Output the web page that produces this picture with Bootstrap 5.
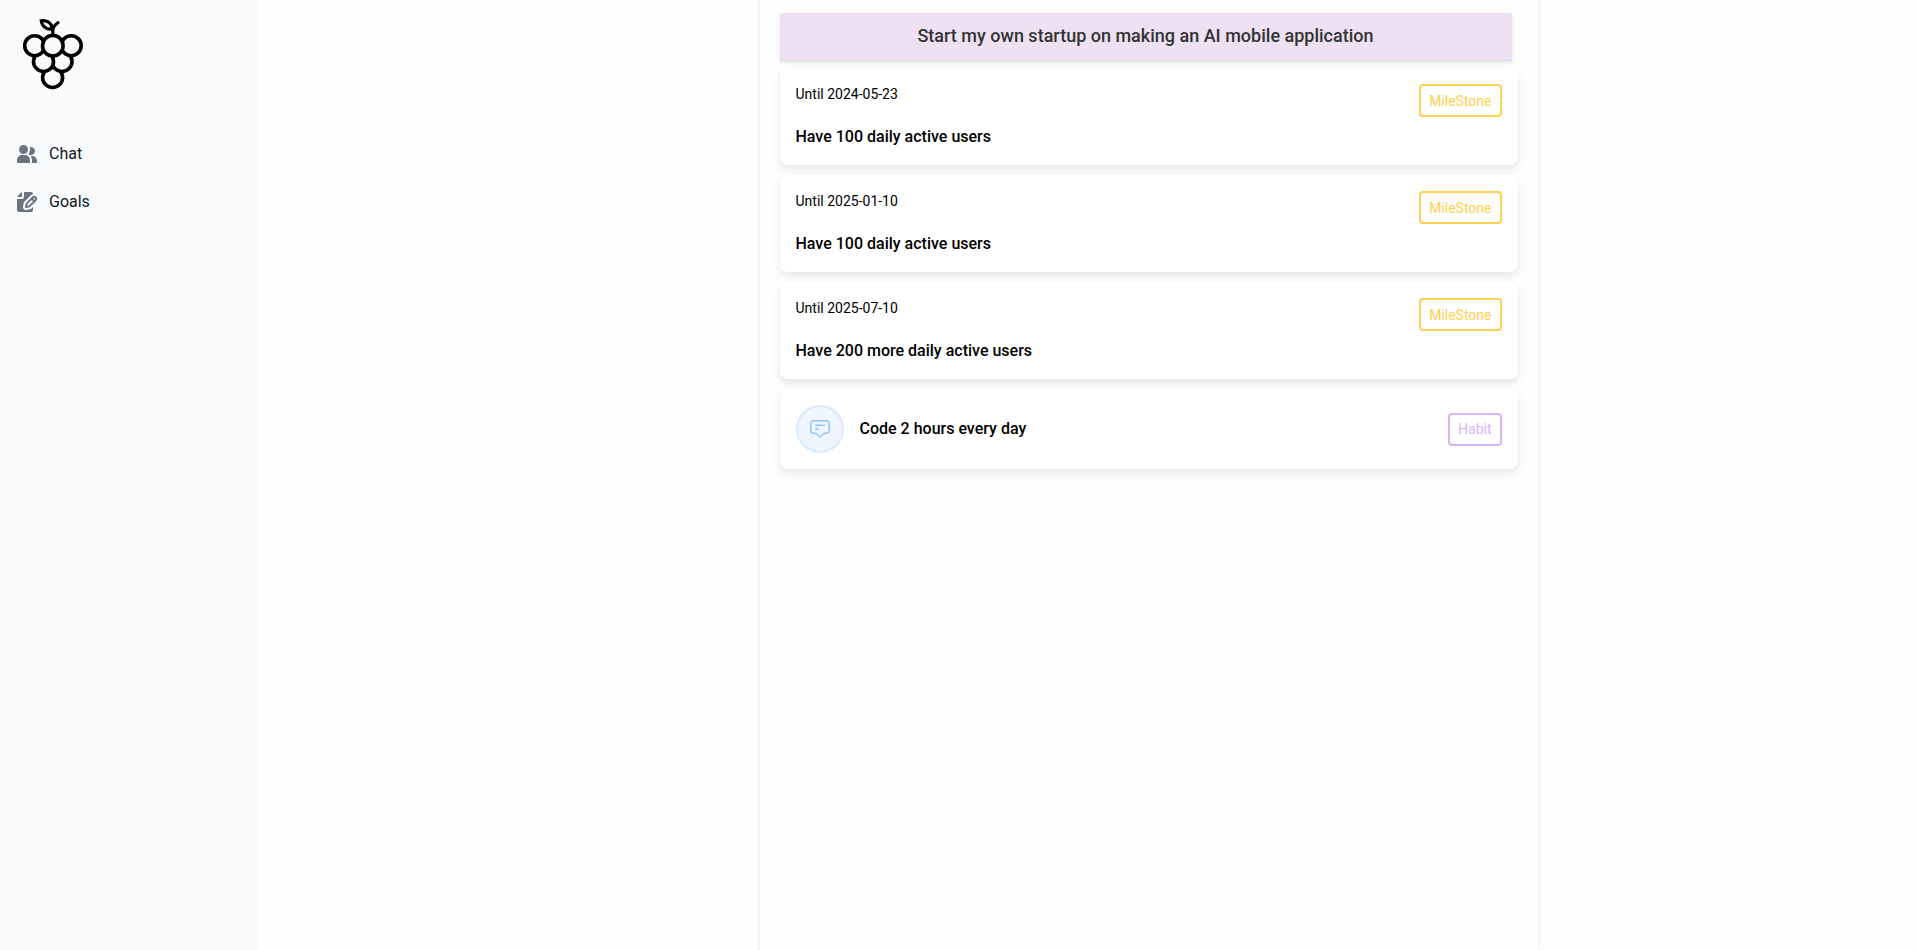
<!DOCTYPE html>
<html lang="en">
<head>
<meta charset="utf-8">
<meta name="viewport" content="width=device-width, initial-scale=1">
<title>Goals</title>
<link href="https://cdn.jsdelivr.net/npm/bootstrap@5.3.0/dist/css/bootstrap.min.css" rel="stylesheet">
<style>
  body { font-family: Roboto, "Liberation Sans", sans-serif; color: #000; background: #fefefe; }
  .sidebar { width: 258px; background: #f9fafb; padding: 16px 8px; }
  .brand { margin: 0 0 42px 12px; }
  .side-link { height: 40px; padding: 0 9px; gap: 12px; color: #111827; line-height: 24px; }
  .side-link svg { width: 20px; color: #6b7280; }
  .content { padding-left: 122px; }
  .panel { width: 778px; padding: 13px 20px; background: #fefefe; box-shadow: 0 0 5px rgba(0,0,0,.1); }
  .goal-title { height: 48px; margin: 0 6px 7px 0; padding-bottom: 2px; background: #eee1f4; color: #333; font-size: 18px; line-height: 24px; font-weight: 500; border-bottom: 1px solid #ddd; box-shadow: 0 2px 4px rgba(0,0,0,.1); }
  .goals { gap: 10px; }
  .goal { padding: 16px; border-radius: 8px; background: #fff; box-shadow: 0 4px 8px rgba(0,0,0,.1); }
  .until { font-size: 14px; line-height: 21px; margin-bottom: 20px; }
  .goal-name { font-size: 16px; line-height: 24px; font-weight: 500; margin: 0; }
  .kind { height: 33px; padding: 0 8px; border: 2px solid; border-radius: 4px; background: none; font-size: 14px; line-height: 20px; }
  .kind-milestone { color: #ffd04f; }
  .kind-habit { color: #d8b4fe; }
  .round-icon { width: 48px; height: 48px; border: 2px solid #dbeafe; background: #eff6ff; color: #93c5fd; }
</style>
</head>
<body>
<div class="d-flex min-vh-100">
  <aside class="sidebar flex-shrink-0">
    <a class="brand d-block" href="#" aria-label="Home">
      <svg class="d-block" width="66" height="76" viewBox="20 16 66 76" fill="#f9fafb" stroke="#000" stroke-width="3.6" stroke-linecap="round">
        <circle cx="52.6" cy="77.5" r="10"/>
        <circle cx="62" cy="61.5" r="10"/>
        <circle cx="43.5" cy="61.5" r="10"/>
        <circle cx="34.7" cy="45.7" r="10"/>
        <circle cx="71.2" cy="45.7" r="10"/>
        <circle cx="52.8" cy="45.7" r="10.3"/>
        <path fill="none" stroke-width="3.2" d="M52.8 34V30C52.8 27 55 25 58 22.8M52.8 29C51 22 46 20 41.3 20.8C42 26 46 30 52.8 29Z"/>
      </svg>
    </a>
    <nav class="d-flex flex-column gap-2">
      <a class="side-link d-flex align-items-center text-decoration-none" href="#">
        <svg viewBox="0 0 20 18" fill="currentColor" aria-hidden="true"><path d="M14 2a3.963 3.963 0 0 0-1.4.267 6.439 6.439 0 0 1-1.331 6.638A4 4 0 1 0 14 2Zm1 9h-1.264A6.957 6.957 0 0 1 15 15v2a2.97 2.97 0 0 1-.184 1H19a1 1 0 0 0 1-1v-1a5.006 5.006 0 0 0-5-5ZM6.5 9a4.5 4.5 0 1 0 0-9 4.5 4.5 0 0 0 0 9ZM8 10H5a5.006 5.006 0 0 0-5 5v2a1 1 0 0 0 1 1h11a1 1 0 0 0 1-1v-2a5.006 5.006 0 0 0-5-5Z"/></svg>
        <span>Chat</span>
      </a>
      <a class="side-link d-flex align-items-center text-decoration-none" href="#">
        <svg viewBox="0 0 20 20" fill="currentColor" aria-hidden="true"><path d="M5 5V.13a2.96 2.96 0 0 0-1.293.749L.879 3.707A2.96 2.96 0 0 0 .13 5H5Z"/><path d="M6.737 11.061a2.961 2.961 0 0 1 .81-1.515l6.117-6.116A4.839 4.839 0 0 1 16 2.141V2a1.97 1.97 0 0 0-1.933-2H7v5a2 2 0 0 1-2 2H0v11a1.969 1.969 0 0 0 1.933 2h12.134A1.97 1.97 0 0 0 16 18v-3.093l-1.546 1.546c-.413.413-.94.695-1.513.81l-3.4.679a2.947 2.947 0 0 1-1.85-.227 2.96 2.96 0 0 1-1.635-3.257l.681-3.397Z"/><path d="M8.961 16a.93.93 0 0 0 .189-.019l3.4-.679a.961.961 0 0 0 .49-.263l6.118-6.117a2.884 2.884 0 0 0-4.079-4.078l-6.117 6.117a.96.96 0 0 0-.263.491l-.679 3.4A.961.961 0 0 0 8.961 16Zm7.477-9.8a.958.958 0 0 1 .68-.281.961.961 0 0 1 .682 1.644l-.315.315-1.36-1.36.313-.318Zm-5.911 5.911 4.236-4.236 1.359 1.359-4.236 4.237-1.7.339.341-1.699Z"/></svg>
        <span>Goals</span>
      </a>
    </nav>
  </aside>
  <main class="content flex-grow-1 d-flex justify-content-center">
    <section class="panel">
      <h1 class="goal-title d-flex align-items-center justify-content-center">Start my own startup on making an AI mobile application</h1>
      <div class="d-grid goals">
        <article class="goal d-flex justify-content-between align-items-start">
          <div><p class="until">Until 2024-05-23</p><h2 class="goal-name">Have 100 daily active users</h2></div>
          <button type="button" class="kind kind-milestone">MileStone</button>
        </article>
        <article class="goal d-flex justify-content-between align-items-start">
          <div><p class="until">Until 2025-01-10</p><h2 class="goal-name">Have 100 daily active users</h2></div>
          <button type="button" class="kind kind-milestone">MileStone</button>
        </article>
        <article class="goal d-flex justify-content-between align-items-start">
          <div><p class="until">Until 2025-07-10</p><h2 class="goal-name">Have 200 more daily active users</h2></div>
          <button type="button" class="kind kind-milestone">MileStone</button>
        </article>
        <article class="goal d-flex justify-content-between align-items-center">
          <div class="d-flex align-items-center gap-3">
            <span class="round-icon rounded-circle d-flex align-items-center justify-content-center">
              <svg width="24" height="24" viewBox="0 0 24 24" fill="none" stroke="currentColor" stroke-width="1.5" aria-hidden="true"><path stroke-linejoin="round" d="M5 3.8H19A2.2 2.2 0 0 1 21.2 6V14A2.2 2.2 0 0 1 19 16.2H16L12 20L8 16.2H5A2.2 2.2 0 0 1 2.8 14V6A2.2 2.2 0 0 1 5 3.8ZM7 8.3H17M7 12.3H11"/></svg>
            </span>
            <h2 class="goal-name">Code 2 hours every day</h2>
          </div>
          <button type="button" class="kind kind-habit">Habit</button>
        </article>
      </div>
    </section>
  </main>
</div>
<script src="https://cdn.jsdelivr.net/npm/bootstrap@5.3.0/dist/js/bootstrap.bundle.min.js"></script>
</body>
</html>
